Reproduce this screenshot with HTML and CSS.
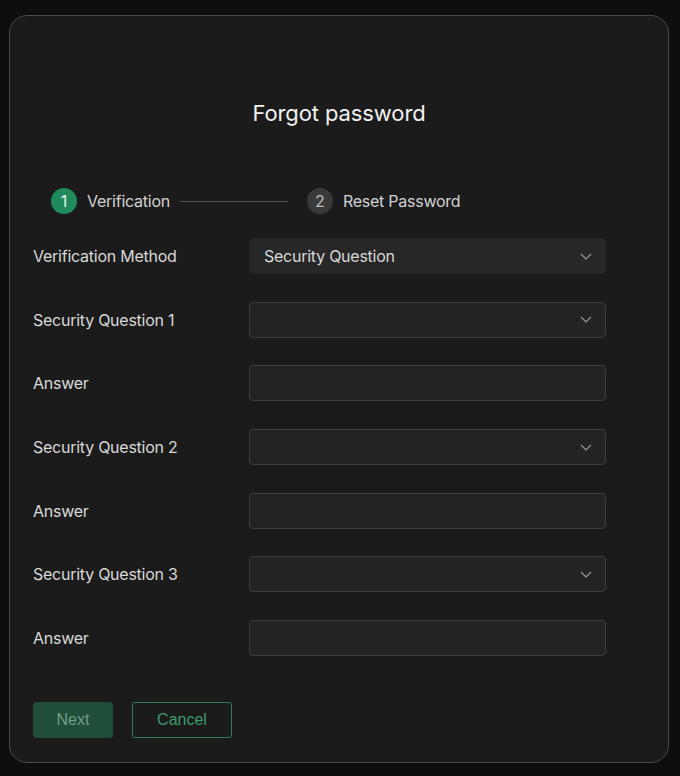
FILE: index.html
```html
<!DOCTYPE html>
<html>
<head>
<meta charset="utf-8">
<link rel="stylesheet" href="styles.css">
</head>
<body>
<div class="card">
  <h1 class="title">Forgot password</h1>
  <div class="stepper">
    <span class="step-num active">1</span>
    <span class="step-label">Verification</span>
    <span class="step-line"></span>
    <span class="step-num">2</span>
    <span class="step-label">Reset Password</span>
  </div>
  <div class="form">
    <div class="label">Verification Method</div>
    <div class="field select filled"><span>Security Question</span><svg class="chev" viewBox="0 0 12 7" width="12" height="7"><path d="M1 1l5 5 5-5" fill="none" stroke="#9a9a9a" stroke-width="1.2"/></svg></div>
    <div class="label">Security Question 1</div>
    <div class="field select"><span></span><svg class="chev" viewBox="0 0 12 7" width="12" height="7"><path d="M1 1l5 5 5-5" fill="none" stroke="#9a9a9a" stroke-width="1.2"/></svg></div>
    <div class="label">Answer</div>
    <div class="field"></div>
    <div class="label">Security Question 2</div>
    <div class="field select"><span></span><svg class="chev" viewBox="0 0 12 7" width="12" height="7"><path d="M1 1l5 5 5-5" fill="none" stroke="#9a9a9a" stroke-width="1.2"/></svg></div>
    <div class="label">Answer</div>
    <div class="field"></div>
    <div class="label">Security Question 3</div>
    <div class="field select"><span></span><svg class="chev" viewBox="0 0 12 7" width="12" height="7"><path d="M1 1l5 5 5-5" fill="none" stroke="#9a9a9a" stroke-width="1.2"/></svg></div>
    <div class="label">Answer</div>
    <div class="field"></div>
  </div>
  <div class="actions">
    <button class="btn btn-primary">Next</button>
    <button class="btn btn-outline">Cancel</button>
  </div>
</div>
</body>
</html>
```
FILE: styles.css
```css
html, body {
  margin: 0;
  padding: 0;
  background: #0e0e0e;
}
body {
  padding: 15px 0 0 9px;
  font-family: Inter, "Noto Sans", sans-serif;
}
.card {
  box-sizing: border-box;
  width: 660px;
  height: 748px;
  background: #1b1b1b;
  border: 1px solid #4a4a4a;
  border-radius: 18px;
  padding: 82px 61px 0 23px;
}
.title {
  margin: 0;
  text-align: center;
  font-size: 22px;
  line-height: 30px;
  font-weight: 400;
  letter-spacing: -0.1px;
  color: #f2f2f2;
  padding-left: 38px;
}
.stepper {
  display: flex;
  align-items: center;
  margin-top: 60px;
  padding-left: 18px;
  height: 26px;
}
.step-num {
  width: 26px;
  height: 26px;
  border-radius: 50%;
  background: #3a3a3a;
  color: #bdbdbd;
  font-size: 16px;
  display: flex;
  align-items: center;
  justify-content: center;
  margin-right: 10px;
}
.step-num.active {
  background: #1f8a5c;
  color: #e6f3ec;
}
.step-label {
  font-size: 16px;
  letter-spacing: -0.25px;
  color: #d2d2d2;
}
.step-line {
  width: 108px;
  height: 1px;
  background: #555;
  margin: 0 19px 0 10px;
}
.form {
  display: grid;
  grid-template-columns: 216px 357px;
  row-gap: 27.7px;
  margin-top: 24px;
  align-items: center;
}
.label {
  font-size: 16px;
  letter-spacing: -0.25px;
  color: #d8d8d8;
}
.field {
  box-sizing: border-box;
  height: 36px;
  background: #232323;
  border: 1px solid #3d3d3d;
  border-radius: 4px;
  display: flex;
  align-items: center;
  justify-content: space-between;
  padding: 0 13px 0 14px;
  font-size: 16px;
  letter-spacing: -0.25px;
  color: #d8d8d8;
}
.field.filled {
  background: #272727;
  border-color: #272727;
}
.chev {
  display: block;
}
.actions {
  display: flex;
  gap: 19px;
  margin-top: 46px;
}
.btn {
  box-sizing: border-box;
  height: 36px;
  border-radius: 3px;
  font-family: "Liberation Sans", Arial, sans-serif;
  font-size: 16px;
  padding: 0;
}
.btn-primary {
  width: 80px;
  background: #1f4f38;
  border: 1px solid #1f4f38;
  color: #6f9f85;
}
.btn-outline {
  width: 100px;
  background: transparent;
  border: 1px solid #2f7d58;
  color: #3f9b6f;
}
```
